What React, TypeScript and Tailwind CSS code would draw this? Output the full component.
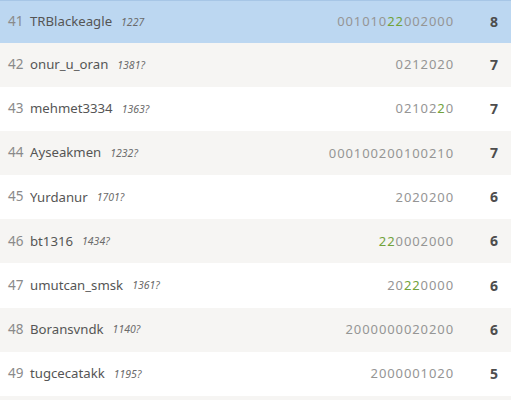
import React from "react";

type Row = {
  rank: number;
  name: string;
  rating: string;
  sheet: { t: string; g?: boolean }[];
  score: number;
};

const rows: Row[] = [
  { rank: 41, name: "TRBlackeagle", rating: "1227", sheet: [{ t: "001010" }, { t: "22", g: true }, { t: "002000" }], score: 8 },
  { rank: 42, name: "onur_u_oran", rating: "1381?", sheet: [{ t: "0212020" }], score: 7 },
  { rank: 43, name: "mehmet3334", rating: "1363?", sheet: [{ t: "02102" }, { t: "2", g: true }, { t: "0" }], score: 7 },
  { rank: 44, name: "Ayseakmen", rating: "1232?", sheet: [{ t: "000100200100210" }], score: 7 },
  { rank: 45, name: "Yurdanur", rating: "1701?", sheet: [{ t: "2020200" }], score: 6 },
  { rank: 46, name: "bt1316", rating: "1434?", sheet: [{ t: "22", g: true }, { t: "0002000" }], score: 6 },
  { rank: 47, name: "umutcan_smsk", rating: "1361?", sheet: [{ t: "20" }, { t: "22", g: true }, { t: "0000" }], score: 6 },
  { rank: 48, name: "Boransvndk", rating: "1140?", sheet: [{ t: "2000000020200" }], score: 6 },
  { rank: 49, name: "tugcecatakk", rating: "1195?", sheet: [{ t: "2000001020" }], score: 5 },
];

export default function App() {
  return (
    <div
      className="w-[511px] h-[400px] overflow-hidden bg-white"
      style={{ fontFamily: '"Noto Sans", "Open Sans", sans-serif' }}
    >
      <div className="flex flex-col">
        {rows.map((r, i) => {
          const bg = i === 0 ? "bg-[#bcd7f1] border-t border-[#a7c6e6]" : i % 2 === 1 ? "bg-[#f6f5f3]" : "bg-white";
          const h = i === 0 ? "h-[42.7px]" : "h-[44.17px]";
          return (
            <div key={r.rank} className={`flex items-center ${h} ${bg} shrink-0`}>
              <div className="pl-[8px] w-[30px] text-[13.5px] text-[#8a8a8a] leading-none">{r.rank}</div>
              <div className="text-[13.2px] text-[#555555] leading-none">{r.name}</div>
              <div className="ml-[9px] text-[10.5px] italic text-[#6b6b6b] leading-none">{r.rating}</div>
              <div className="flex-1" />
              <div className="text-[13px] tracking-[0.07em] text-[#959595] leading-none text-right">
                {r.sheet.map((s, j) => (
                  <span key={j} className={s.g ? "text-[#72a23a]" : ""}>
                    {s.t}
                  </span>
                ))}
              </div>
              <div className="w-[57px] pr-[13px] text-right text-[14px] font-bold text-[#4d4d4d] leading-none">
                {r.score}
              </div>
            </div>
          );
        })}
        <div className="h-[20px] bg-[#f6f5f3] shrink-0" />
      </div>
    </div>
  );
}
